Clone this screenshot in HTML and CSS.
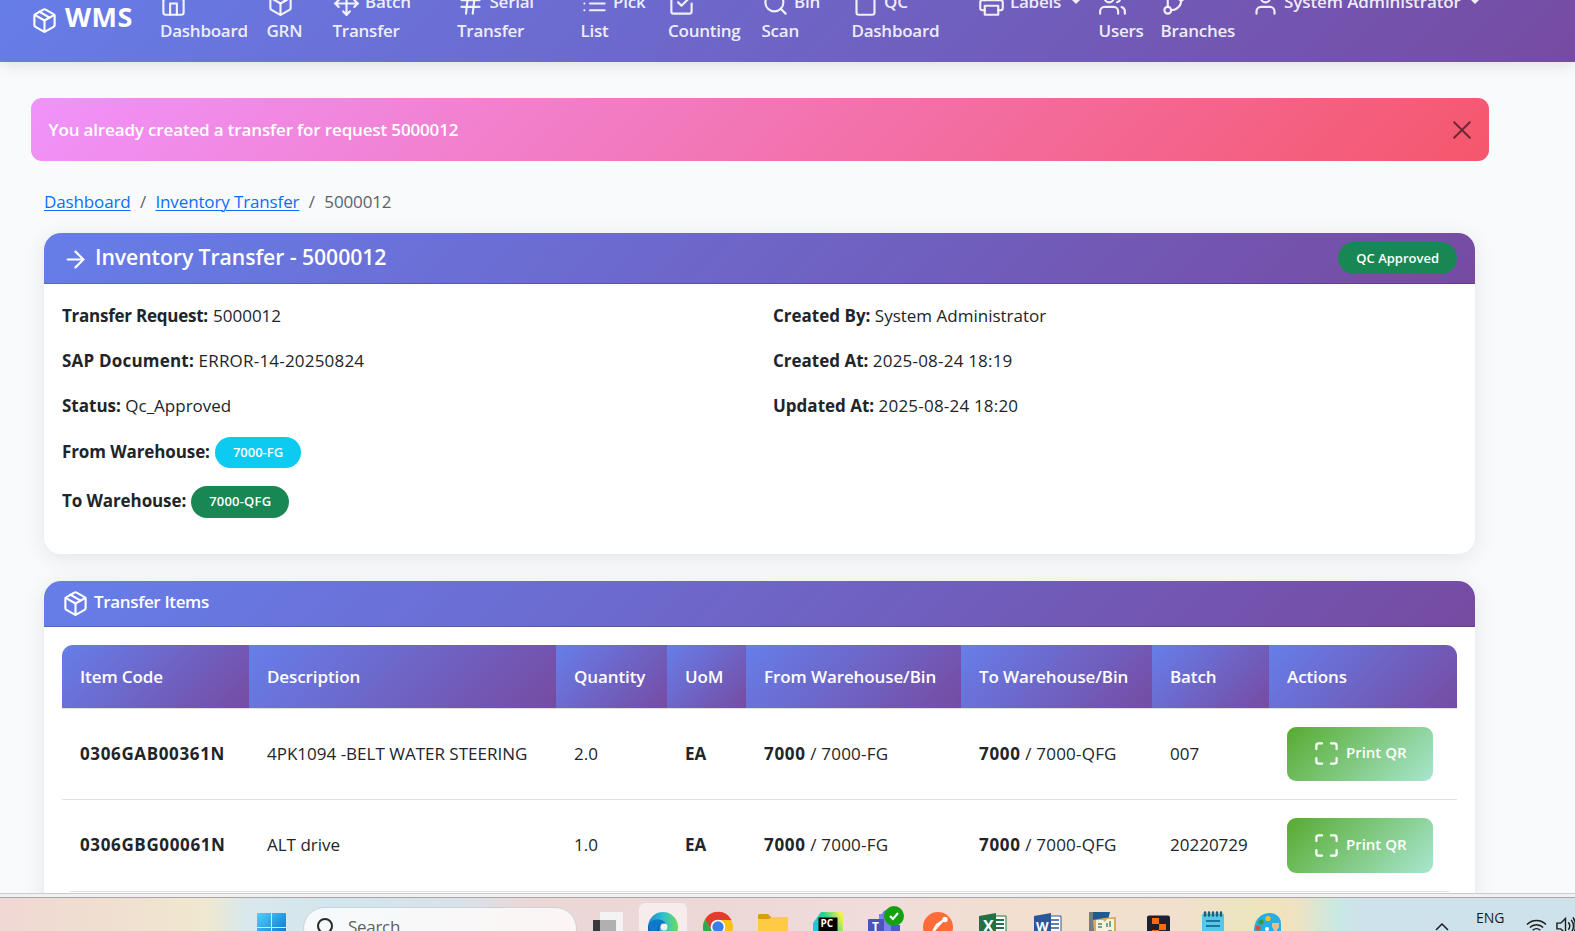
FILE: index.html
```html
<!DOCTYPE html>
<html lang="en">
<head>
<meta charset="utf-8">
<title>WMS - Inventory Transfer</title>
<link rel="stylesheet" href="styles.css">
</head>
<body>
<svg class="defs" aria-hidden="true">
  <symbol id="i-package" viewBox="0 0 24 24"><line x1="16.5" y1="9.4" x2="7.5" y2="4.21"/><path d="M21 16V8a2 2 0 0 0-1-1.73l-7-4a2 2 0 0 0-2 0l-7 4A2 2 0 0 0 3 8v8a2 2 0 0 0 1 1.73l7 4a2 2 0 0 0 2 0l7-4A2 2 0 0 0 21 16z"/><polyline points="3.27 6.96 12 12.01 20.73 6.96"/><line x1="12" y1="22.08" x2="12" y2="12"/></symbol>
  <symbol id="i-home" viewBox="0 0 24 24"><path d="M3 9l9-7 9 7v11a2 2 0 0 1-2 2H5a2 2 0 0 1-2-2z"/><polyline points="9 22 9 12 15 12 15 22"/></symbol>
  <symbol id="i-move" viewBox="0 0 24 24"><polyline points="5 9 2 12 5 15"/><polyline points="9 5 12 2 15 5"/><polyline points="15 19 12 22 9 19"/><polyline points="19 9 22 12 19 15"/><line x1="2" y1="12" x2="22" y2="12"/><line x1="12" y1="2" x2="12" y2="22"/></symbol>
  <symbol id="i-hash" viewBox="0 0 24 24"><line x1="4" y1="9" x2="20" y2="9"/><line x1="4" y1="15" x2="20" y2="15"/><line x1="10" y1="3" x2="8" y2="21"/><line x1="16" y1="3" x2="14" y2="21"/></symbol>
  <symbol id="i-list" viewBox="0 0 24 24"><line x1="8" y1="6" x2="21" y2="6"/><line x1="8" y1="12" x2="21" y2="12"/><line x1="8" y1="18" x2="21" y2="18"/><line x1="3" y1="6" x2="3.01" y2="6"/><line x1="3" y1="12" x2="3.01" y2="12"/><line x1="3" y1="18" x2="3.01" y2="18"/></symbol>
  <symbol id="i-check" viewBox="0 0 24 24"><polyline points="9 11 12 14 22 4"/><path d="M21 12v7a2 2 0 0 1-2 2H5a2 2 0 0 1-2-2V5a2 2 0 0 1 2-2h11"/></symbol>
  <symbol id="i-search" viewBox="0 0 24 24"><circle cx="11" cy="11" r="8"/><line x1="21" y1="21" x2="16.65" y2="16.65"/></symbol>
  <symbol id="i-clipboard" viewBox="0 0 24 24"><path d="M16 4h2a2 2 0 0 1 2 2v14a2 2 0 0 1-2 2H6a2 2 0 0 1-2-2V6a2 2 0 0 1 2-2h2"/><rect x="8" y="2" width="8" height="4" rx="1"/></symbol>
  <symbol id="i-printer" viewBox="0 0 24 24"><polyline points="6 9 6 2 18 2 18 9"/><path d="M6 18H4a2 2 0 0 1-2-2v-5a2 2 0 0 1 2-2h16a2 2 0 0 1 2 2v5a2 2 0 0 1-2 2h-2"/><rect x="6" y="14" width="12" height="8"/></symbol>
  <symbol id="i-users" viewBox="0 0 24 24"><path d="M17 21v-2a4 4 0 0 0-4-4H5a4 4 0 0 0-4 4v2"/><circle cx="9" cy="7" r="4"/><path d="M23 21v-2a4 4 0 0 0-3-3.87"/><path d="M16 3.13a4 4 0 0 1 0 7.75"/></symbol>
  <symbol id="i-branch" viewBox="0 0 24 24"><line x1="6" y1="3" x2="6" y2="15"/><circle cx="18" cy="6" r="3"/><circle cx="6" cy="18" r="3"/><path d="M18 9a9 9 0 0 1-9 9"/></symbol>
  <symbol id="i-user" viewBox="0 0 24 24"><path d="M20 21v-2a4 4 0 0 0-4-4H8a4 4 0 0 0-4 4v2"/><circle cx="12" cy="7" r="4"/></symbol>
  <symbol id="i-arrow" viewBox="0 0 24 24"><line x1="5" y1="12" x2="19" y2="12"/><polyline points="12 5 19 12 12 19"/></symbol>
  <symbol id="i-maximize" viewBox="0 0 24 24"><path d="M8 3H5a2 2 0 0 0-2 2v3m18 0V5a2 2 0 0 0-2-2h-3m0 18h3a2 2 0 0 0 2-2v-3M3 16v3a2 2 0 0 0 2 2h3"/></symbol>
</svg>

<div class="page">
  <header class="navbar">
    <div class="brand"><svg class="icon"><use href="#i-package"/></svg><span>WMS</span></div>
    <nav class="nav">
      <div class="nav-item"><div class="nav-top"><svg class="icon"><use href="#i-home"/></svg></div><div>Dashboard</div></div>
      <div class="nav-item"><div class="nav-top"><svg class="icon"><use href="#i-package"/></svg></div><div>GRN</div></div>
      <div class="nav-item"><div class="nav-top"><svg class="icon"><use href="#i-move"/></svg>Batch</div><div>Transfer</div></div>
      <div class="nav-item"><div class="nav-top"><svg class="icon"><use href="#i-hash"/></svg>Serial</div><div>Transfer</div></div>
      <div class="nav-item"><div class="nav-top"><svg class="icon"><use href="#i-list"/></svg>Pick</div><div>List</div></div>
      <div class="nav-item"><div class="nav-top"><svg class="icon"><use href="#i-check"/></svg></div><div>Counting</div></div>
      <div class="nav-item"><div class="nav-top"><svg class="icon"><use href="#i-search"/></svg>Bin</div><div>Scan</div></div>
      <div class="nav-item"><div class="nav-top"><svg class="icon"><use href="#i-clipboard"/></svg>QC</div><div>Dashboard</div></div>
      <div class="nav-item"><div class="nav-top"><svg class="icon"><use href="#i-printer"/></svg>Labels<i class="caret"></i></div></div>
      <div class="nav-item"><div class="nav-top"><svg class="icon"><use href="#i-users"/></svg></div><div>Users</div></div>
      <div class="nav-item"><div class="nav-top"><svg class="icon"><use href="#i-branch"/></svg></div><div>Branches</div></div>
      <div class="nav-item"><div class="nav-top"><svg class="icon"><use href="#i-user"/></svg><span class="user-name">System Administrator</span><i class="caret"></i></div></div>
    </nav>
  </header>

  <div class="alert">
    <span>You already created a transfer for request 5000012</span>
    <svg class="close" viewBox="0 0 18 18"><path d="M1.2 1.2l15.6 15.6M16.8 1.2L1.2 16.8"/></svg>
  </div>

  <main class="content">
    <div class="breadcrumb"><a>Dashboard</a><span class="sep">/</span><a>Inventory Transfer</a><span class="sep">/</span><span>5000012</span></div>

    <section class="card">
      <div class="card-head head-main">
        <svg class="icon"><use href="#i-arrow"/></svg><h1>Inventory Transfer - 5000012</h1>
        <span class="badge badge-green">QC Approved</span>
      </div>
      <div class="details">
        <div>
          <p><b class="tight">Transfer Request:</b> 5000012</p>
          <p class="wide"><b>SAP Document:</b> ERROR-14-20250824</p>
          <p><b>Status:</b> Qc_Approved</p>
          <p class="tall"><b>From Warehouse:</b> <span class="badge badge-cyan">7000-FG</span></p>
          <p class="tall"><b>To Warehouse:</b> <span class="badge badge-green wide">7000-QFG</span></p>
        </div>
        <div>
          <p><b>Created By:</b> System Administrator</p>
          <p><b>Created At:</b> <span class="wide">2025-08-24 18:19</span></p>
          <p><b>Updated At:</b> <span class="wide">2025-08-24 18:20</span></p>
        </div>
      </div>
    </section>

    <section class="card card-items">
      <div class="card-head head-items"><svg class="icon"><use href="#i-package"/></svg><h2>Transfer Items</h2></div>
      <div class="table">
        <div class="row head"><span>Item Code</span><span>Description</span><span>Quantity</span><span>UoM</span><span>From Warehouse/Bin</span><span>To Warehouse/Bin</span><span>Batch</span><span>Actions</span></div>
        <div class="row"><b class="code">0306GAB00361N</b><span>4PK1094 -BELT WATER STEERING</span><span>2.0</span><b>EA</b><span class="bin"><b>7000</b> / 7000-FG</span><span class="bin"><b>7000</b> / 7000-QFG</span><span>007</span><div><button class="print"><svg class="icon"><use href="#i-maximize"/></svg><span>Print QR</span></button></div></div>
        <div class="row"><b class="code">0306GBG00061N</b><span>ALT drive</span><span>1.0</span><b>EA</b><span class="bin"><b>7000</b> / 7000-FG</span><span class="bin"><b>7000</b> / 7000-QFG</span><span>20220729</span><div><button class="print"><svg class="icon"><use href="#i-maximize"/></svg><span>Print QR</span></button></div></div>
      </div>
    </section>
  </main>
</div>

<footer class="desktop">
  <div class="window-edge"></div>
  <div class="taskbar">
    <svg class="start" viewBox="0 0 29 29"><defs><linearGradient id="win" x1="0" y1="0" x2="1" y2="1"><stop offset="0" stop-color="#4fd0fb"/><stop offset="1" stop-color="#0067c8"/></linearGradient></defs><path fill="url(#win)" d="M0 1a1 1 0 0 1 1-1h13v14H0zM15 0h13a1 1 0 0 1 1 1v13H15zM0 15h14v14H0zM15 15h14v14H15z"/></svg>
    <div class="search"><svg viewBox="0 0 20 20"><circle cx="9" cy="8" r="7"/><path d="M14 13l5 6"/></svg><span>Search</span></div>
    <div class="apps">
      <div class="app"><svg viewBox="0 0 30 30"><path d="M0 8h23v22H0z" fill="#393939"/><path d="M7 0h23v30H7z" fill="#f4f3f3"/><path d="M7 8h16v22H7z" fill="#b1afaf"/></svg></div>
      <div class="app active"><svg viewBox="0 0 30 30"><defs><linearGradient id="edge"><stop offset="0" stop-color="#1689d6"/><stop offset=".5" stop-color="#2fc0cf"/><stop offset="1" stop-color="#6bdc5b"/></linearGradient></defs><circle cx="15" cy="15" r="15" fill="url(#edge)"/><path d="M0 15C2 8 10 6 16 10c-5 2-6 8-3 14l3 6C6 30 0 24 0 15z" fill="#0c59a4"/><path d="M1 12C5 5 18 7 18 13c-6-3-9 2-8 9C5 22 0 19 1 12z" fill="#1377c8"/><circle cx="16" cy="15" r="3.4" fill="#f3f2f4"/></svg></div>
      <div class="app"><svg viewBox="0 0 30 30"><circle cx="15" cy="15" r="15" fill="#fbc116"/><path d="M2 7.5A15 15 0 0 1 28.5 8H15a7 7 0 0 0-6.5 10z" fill="#e33b2e"/><path d="M2 7.5A15 15 0 0 0 13 30l5-9-9-3z" fill="#2da94f"/><circle cx="15" cy="15" r="7.3" fill="#fff"/><circle cx="15" cy="15" r="5.7" fill="#3b7ded"/></svg></div>
      <div class="app"><svg viewBox="0 0 30 30"><path d="M0 3.5A1.5 1.5 0 0 1 1.5 2H10l3 3h15a2 2 0 0 1 2 2v6H0z" fill="#dc9c10"/><path d="M0 7h11l3-2h14a2 2 0 0 1 2 2v23H0z" fill="#ffcb45"/></svg></div>
      <div class="app"><svg viewBox="0 0 30 30"><defs><linearGradient id="pc" x1="0" y1=".5" x2="1" y2="0"><stop offset="0" stop-color="#1ac8e8"/><stop offset=".45" stop-color="#25d28e"/><stop offset=".9" stop-color="#f1ef51"/></linearGradient></defs><path d="M8 0h20l2 2v28H0V11z" fill="url(#pc)"/><path d="M5.5 5.5h19V30h-19z" fill="#000"/><text x="7.4" y="15.3" class="pc">PC</text></svg></div>
      <div class="app"><svg viewBox="0 0 38 36" class="teams"><path d="M11 8h13v28H11z" fill="#7b83eb"/><circle cx="19" cy="9" r="5" fill="#7279df"/><path d="M23 19h9v17h-9z" fill="#5059c9"/><rect y="13" width="16" height="23" rx="1" fill="#4b53bc"/><text x="4" y="25" class="t">T</text><circle cx="26" cy="10" r="10" fill="#13a10e"/><path d="M22 10l3 3 5-6" fill="none" stroke="#fff" stroke-width="2"/></svg></div>
      <div class="app"><svg viewBox="0 0 30 30"><circle cx="15" cy="15" r="15" fill="#ff6c37"/><circle cx="22" cy="7.5" r="2.7" fill="#fff"/><path d="M21 9L11 20l-3 1 5-9 6-4z" fill="#fff"/></svg></div>
      <div class="app"><svg viewBox="0 0 30 30"><path d="M15 4h13v26H15z" fill="#fff" stroke="#207245"/><path d="M18 8h8M18 12h8M18 16h8" stroke="#207245" stroke-width="2"/><path d="M1 4l17-3v29H1z" fill="#207245"/><text x="5" y="20" class="ms">X</text></svg></div>
      <div class="app"><svg viewBox="0 0 30 30"><path d="M15 4h13v26H15z" fill="#fff" stroke="#2b5797"/><path d="M18 8h8M18 12h8M18 16h8" stroke="#2b5797" stroke-width="1.5"/><path d="M1 4l17-3v29H1z" fill="#2b579a"/><text x="3" y="19" class="ms small">W</text></svg></div>
      <div class="app"><svg viewBox="0 0 30 30"><path d="M1 0h21l-8 30H1z" fill="#1d5b91"/><path d="M1 0h4v30H1z" fill="#747d84"/><path d="M5 8l11-2 12-1v25H6z" fill="#d5aa63"/><path d="M8 8h7l2 2 2-3h7v23H8z" fill="#f7f1df"/><path d="M10 12h4M10 15h4M19 15v-4M22 15V9M20 19h4" stroke="#56866a" stroke-width="1.5"/></svg></div>
      <div class="app"><svg viewBox="0 0 30 30"><rect x="4" y="3.5" width="23" height="28" rx="2" fill="#1c2031"/><path d="M9 6h7v6H9zM16 12h7v6h-7zM9 18h7v6H9z" fill="#ff6b0a"/></svg></div>
      <div class="app"><svg viewBox="0 0 30 30"><rect x="4" y="2" width="22" height="30" rx="1" fill="#55c8e8"/><path d="M8 9h14M8 14h14" stroke="#075b83" stroke-width="1.7"/><path d="M7 .5v3M11 .5v3M15 .5v3M19 .5v3M23 .5v3" stroke="#17617c" stroke-width="2.5" stroke-linecap="round"/></svg></div>
      <div class="app"><svg viewBox="0 0 30 30"><path d="M1 17C2 6 9 1 17 1c6 0 11 4 11 11v18H3C1 27 1 21 1 17z" fill="#28aee7"/><circle cx="15" cy="6.5" r="2.6" fill="#f9bf24"/><circle cx="8" cy="10" r="2.6" fill="#329b41"/><circle cx="5" cy="16" r="2.6" fill="#d65032"/><circle cx="14" cy="17" r="2" fill="#fff"/><path d="M19 11h7v4l-2 3v12h-3V18l-2-3z" fill="#e3bd8f"/></svg></div>
    </div>
    <div class="tray">
      <svg class="chevron" viewBox="0 0 14 9"><path d="M1 8l6-6 6 6"/></svg>
      <span>ENG</span>
      <svg class="wifi" viewBox="0 0 22 18"><path d="M1 7.5a14 14 0 0 1 20 0M4 10.5a10 10 0 0 1 14 0M7 13.5a6 6 0 0 1 8 0"/></svg>
      <svg class="sound" viewBox="0 0 20 20"><path d="M1 7h4l5-5v16l-5-5H1zM13 6q3 4 0 8M16 3.5q5 6.500 0 13M18 1q5 9 0 18"/></svg>
    </div>
  </div>
</footer>
</body>
</html>
```

FILE: styles.css
```css
* { box-sizing: border-box; }
body { margin: 0; height: 931px; overflow: hidden; background: #f8fafc; color: #212529; font: 17px/27px "Open Sans", "Noto Sans", sans-serif; display: flex; flex-direction: column; }
.defs { display: none; }
.page { height: 893px; overflow: hidden; flex: none; }
.icon { width: 27px; height: 27px; flex: none; fill: none; stroke: currentColor; stroke-width: 1.9; stroke-linecap: round; stroke-linejoin: round; }
b { font-weight: 700; }
.wide { letter-spacing: .2px; }
.tight { letter-spacing: -.25px; margin-right: .7px; }

.navbar { display: flex; height: 92px; margin-top: -30px; background: linear-gradient(135deg, #667eea 0%, #764ba2 100%); box-shadow: 0 2px 16px rgba(0, 0, 0, .12); }
.brand { display: flex; width: 129px; padding: 37px 0 0 31px; color: #fff; font-size: 27px; line-height: 27px; font-weight: 700; letter-spacing: .5px; gap: 7px; flex: none; }
.brand span { margin-top: -4px; }
.nav { display: grid; grid-template-columns: 106.5px 66px 124.5px 123.5px 87.5px 93.5px 90px 126px 121px 62px 91px 300px; margin-left: 31px; padding-top: 16.6px; color: rgba(255, 255, 255, .9); font-weight: 600; line-height: 29px; letter-spacing: -.25px; white-space: nowrap; }
.nav-top { display: flex; height: 29px; gap: 5.5px; }
.nav-top .icon { margin-top: 3.4px; }
.user-name { letter-spacing: -.1px; }
.caret { align-self: flex-start; margin: 12px 0 0 4px; border: 5px solid transparent; border-top-color: currentColor; border-bottom: 0; }

.alert { display: flex; align-items: center; justify-content: space-between; width: 1458px; height: 63px; margin: 36px 0 0 31px; padding: 0 18px 0 17.5px; border-radius: 11px; background: linear-gradient(135deg, #f093fb 0%, #f5576c 100%); color: #fff; font-weight: 600; letter-spacing: -.15px; }
.close { width: 18px; height: 18px; fill: none; stroke: rgba(0, 0, 0, .55); stroke-width: 2; stroke-linecap: round; }

.content { width: 1431px; margin-left: 44px; padding-top: 27px; }
.breadcrumb { display: flex; height: 27px; margin-bottom: 18px; color: #5c636a; letter-spacing: -.13px; }
.breadcrumb a { color: #0d6efd; text-decoration: underline; text-underline-offset: 2px; text-decoration-thickness: 1px; }
.sep { padding: 0 9.4px; }

.card { border-radius: 17px; background: #fff; box-shadow: 0 4px 22px rgba(0, 0, 0, .09); margin-bottom: 27px; }
.card-items { padding-bottom: 30px; }
.card-head { display: flex; align-items: center; padding: 0 18px; color: #fff; border-radius: 17px 17px 0 0; border-bottom: 1px solid rgba(0, 0, 0, .175); background: linear-gradient(135deg, #667eea 0%, #764ba2 100%) border-box; }
.head-main { height: 51px; }
.head-main .icon { margin-top: 2px; }
.head-items { height: 46px; }
.card-head h1 { margin: -3px auto 0 6px; font-size: 21.2px; font-weight: 600; letter-spacing: -.06px; }
.card-head h2 { margin: -4px 0 0 5px; font-size: 17px; font-weight: 600; letter-spacing: -.35px; }
.badge { display: inline-flex; align-items: center; height: 31.5px; padding: 0 18px; border-radius: 17px; color: #fff; font-size: 13px; font-weight: 600; white-space: nowrap; }
.badge-green { background: #198754; }
.badge-cyan { background: #0dcaf0; }
.details { display: grid; grid-template-columns: 711px 1fr; height: 270px; padding: 18px; }
.details p { margin: 0 0 18px; height: 27px; white-space: nowrap; }
.details p.tall { display: flex; align-items: center; gap: 5px; height: 31.5px; margin-top: -.2px; }
.tall b { margin-top: -2px; letter-spacing: -.1px; }

.table { margin: 18px; border-radius: 11px; overflow: hidden; }
.row { display: grid; grid-template-columns: 187px 307px 111px 79px 215px 191px 117px 188px; height: 91.5px; border-bottom: 1px solid #dee2e6; align-items: center; white-space: nowrap; }
.row > * { padding-left: 18px; }
.row > span, .row > b { margin-top: -1px; }
.row.head { height: 63.5px; align-items: stretch; color: #fff; font-weight: 600; letter-spacing: -.1px; }
.row.head > span { margin-top: 0; line-height: 63px; background: linear-gradient(135deg, #667eea 0%, #764ba2 100%); }
.code { letter-spacing: .63px; }
.bin { letter-spacing: .2px; }
.bin b { letter-spacing: .7px; }
.print { display: flex; align-items: center; justify-content: center; gap: 5.5px; width: 146px; height: 54.5px; padding: 0; border: 0; border-radius: 9px; background: linear-gradient(135deg, #56ab2f 0%, #a8e6cf 100%); color: #fff; font: 600 15px/22px "Open Sans", sans-serif; }
.print .icon { stroke-width: 2; }
.print span { margin-top: -3px; }

.desktop { height: 38px; flex: none; }
.window-edge { height: 5px; background: #f1f1f2; border-top: 1px solid #c9cbce; border-bottom: 1px solid #a9a6a9; }
.taskbar { display: flex; height: 33px; overflow: hidden; background: linear-gradient(90deg, #f0d8d4 0, #f0dfd0 110px, #f0e8cf 205px, #d9e8ea 245px, #d3e6ee 340px, #d9e2ea 460px, #ecd7d7 530px, #ecd8d7 720px, #f0dcda 880px, #f2dfcf 1020px, #f1e0cd 1180px, #ece5bd 1250px, #f2e2be 1280px, #ece3c4 1300px, #c7e9e3 1338px, #cee2eb 1360px, #cee2eb 1575px); }
.start { width: 29px; height: 29px; margin: 15px 17px 0 257px; flex: none; }
.search { display: flex; gap: 12px; width: 274px; height: 43px; margin-top: 9px; padding: 8px 0 0 12px; border: 1px solid #c9d4d8; border-radius: 22px; background: linear-gradient(90deg, #f6fafc, #fbf5f4); color: #5e6063; line-height: 22px; letter-spacing: -.3px; flex: none; }
.search svg { width: 20px; height: 20px; margin-top: 2px; fill: none; stroke: #2b2b2b; stroke-width: 2; }
.apps { display: flex; margin-left: 3px; }
.app { display: flex; justify-content: center; width: 55px; height: 48px; flex: none; padding-top: 14px; }
.app svg { width: 30px; height: 30px; overflow: visible; flex: none; }
.app .teams { width: 38px; height: 36px; margin: -6px 0 0 8px; }
.active { width: 48px; margin: 5px 3.5px 0; padding-top: 9px; border-radius: 6px; background: #f5eceb; }
.pc, .t, .ms { fill: #fff; font: 700 10px "Open Sans", sans-serif; }
.t { font-size: 12px; }
.ms { font-size: 16px; }
.small { font-size: 13px; }
.tray { display: flex; width: 140px; margin-left: 140px; font-size: 14px; line-height: 20px; color: #1b1b1b; flex: none; }
.tray svg { fill: none; stroke: #1b1b1b; stroke-width: 1.5; flex: none; }
.tray span { margin: 10px 21px 0 27px; }
.chevron { width: 14px; height: 9px; margin-top: 24px; }
.wifi { width: 21px; height: 18px; margin-top: 19px; }
.sound { width: 19px; height: 20px; margin: 18px 0 0 9px; }
```
